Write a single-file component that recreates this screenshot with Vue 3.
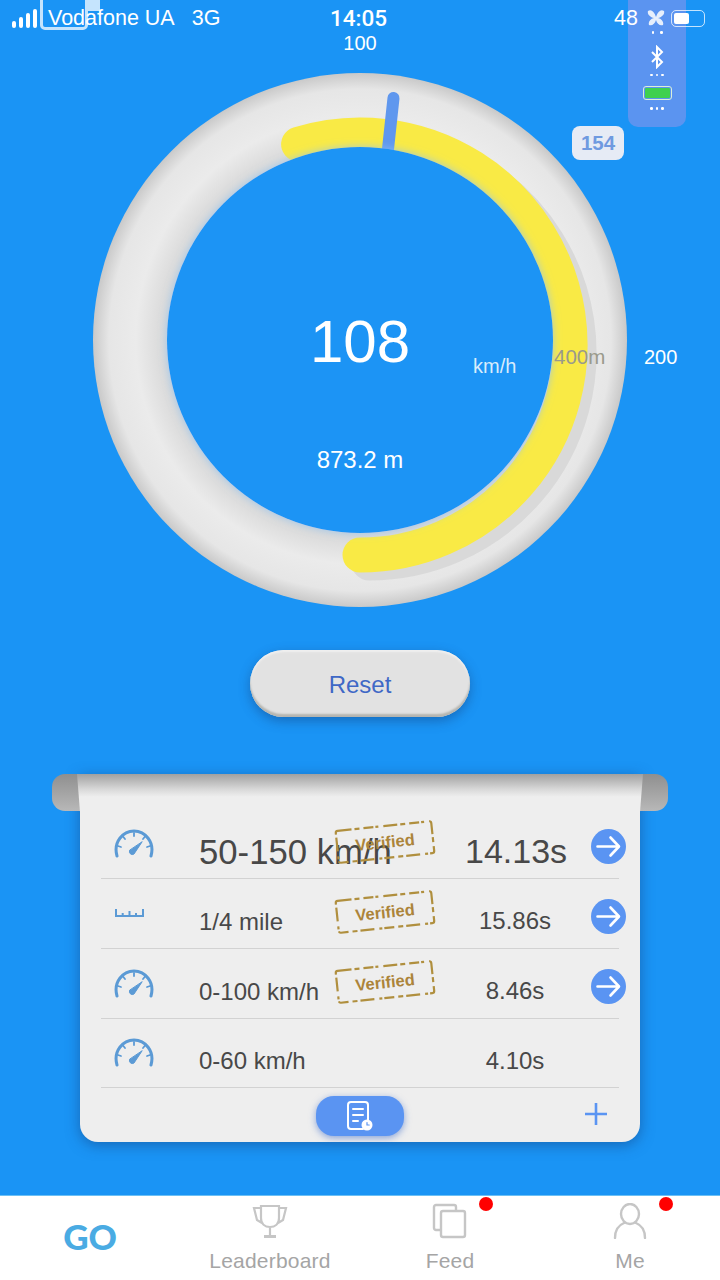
<template>
  <div class="page">
    <div class="status">
      <div class="status-left">
        <span class="signal"><i v-for="h in [7, 11, 15, 19]" :key="h" :style="{ height: h + 'px' }"></i></span>
        <span class="carrier">Vodafone UA</span>
        <span class="net">3G</span>
      </div>
      <span class="clock">14:05</span>
      <div class="status-right">
        <span>48</span>
        <svg class="fan" width="20" height="20" viewBox="0 0 20 20" fill="#fff">
          <path d="M2 3c3-2 6 0 8 6 2-6 5-8 8-6 1 3-2 6-6 7 4 1 6 4 5 7-3 1-6-1-7-5-1 4-4 6-7 5-1-3 1-6 5-7C4 9 1 6 2 3z" />
        </svg>
        <span class="battery"><i></i></span>
      </div>
    </div>
    <div class="notch"></div>
    <div class="notch-side"></div>

    <div class="side-pill">
      <span class="dots two"><i></i><i></i></span>
      <svg class="bt" width="14" height="24" viewBox="0 0 14 24" fill="none" stroke="#fff" stroke-width="2">
        <path d="M2 7l10 10-5 5V2l5 5L2 17" />
      </svg>
      <span class="dots"><i></i><i></i><i></i></span>
      <span class="mini-batt"><i></i></span>
      <span class="dots"><i></i><i></i><i></i></span>
    </div>

    <div class="top-label">100</div>

    <div class="gauge">
      <svg width="534" height="534" viewBox="0 0 534 534">
        <defs>
          <radialGradient id="ringFill" cx="50%" cy="50%" r="50%">
            <stop offset="0.72" stop-color="#d6d6d6" />
            <stop offset="0.84" stop-color="#ebebeb" />
            <stop offset="0.94" stop-color="#e6e6e6" />
            <stop offset="1" stop-color="#c9c9c9" />
          </radialGradient>
          <filter id="discShadow" x="-10%" y="-10%" width="120%" height="120%">
            <feDropShadow dx="0" dy="0" stdDeviation="4" flood-color="#8fc4f5" flood-opacity="0.8" />
          </filter>
        </defs>
        <circle cx="267" cy="267" r="267" fill="url(#ringFill)" />
        <path :d="arc" transform="translate(9 13)" fill="none" stroke="#d9d9d9" stroke-width="35" stroke-linecap="round" />
        <path :d="arc" transform="translate(0 5)" fill="none" stroke="#f9ea45" stroke-width="35" stroke-linecap="round" />
        <path d="M300.5 25 L295 76" stroke="#5f97ee" stroke-width="12" stroke-linecap="round" />
        <circle cx="267" cy="267" r="193" fill="#1a94f5" filter="url(#discShadow)" />
      </svg>
      <span class="speed">108</span>
      <span class="unit">km/h</span>
      <span class="distance">873.2 m</span>
      <span class="mark-400">400m</span>
      <span class="mark-200">200</span>
      <span class="badge">154</span>
    </div>

    <button class="reset">Reset</button>

    <div class="card">
      <div class="curl-tab left"></div>
      <div class="curl-tab right"></div>
      <div class="curl"></div>

      <div v-for="row in rows" :key="row.label" class="row" :class="{ big: row.big, last: row.last }">
        <svg v-if="row.icon === 'gauge'" class="row-icon" width="40" height="30" viewBox="0 0 40 30" fill="none" stroke="#5b9ad5" stroke-linecap="round">
          <path d="M3 27C-1 13 9 2 20 2s21 11 17 25" stroke-width="3" />
          <path d="M20 4v3M9 7.5l2 2.5M31 7.5l-2 2.5M4 17l3 1M36 17l-3 1" stroke-width="1.8" />
          <path d="M15.5 21.5a3 3 0 0 0 4.5 3.5L28 13z" fill="#5b9ad5" stroke-width="1" />
        </svg>
        <svg v-else class="row-icon" width="40" height="30" viewBox="0 0 40 30" fill="none" stroke="#5b9ad5" stroke-width="2">
          <path d="M2 10v7h27v-7M8.7 14v3M15.5 12v5M22 14v3" />
        </svg>
        <span class="label">{{ row.label }}</span>
        <span class="time">{{ row.time }}</span>
        <svg v-if="row.verified" class="go" width="35" height="35" viewBox="0 0 35 35" fill="none" stroke="#fff" stroke-width="2.6" stroke-linecap="round" stroke-linejoin="round">
          <circle cx="17.5" cy="17.5" r="17.5" fill="#5a94f2" stroke="none" />
          <path d="M6.5 17.5h21M19.5 8.5l8.5 9-8.5 9" />
        </svg>
        <div v-if="row.verified" class="stamp">
          <svg width="100" height="38" viewBox="0 0 100 38" fill="none" stroke="#b08f3e" stroke-width="2.2">
            <rect x="2" y="3" width="96" height="32" rx="2" stroke-dasharray="14 3 5 4 10 2 3 5" />
          </svg>
          <span>Verified</span>
        </div>
      </div>

      <div class="card-foot">
        <span></span>
        <button class="history">
          <svg width="28" height="32" viewBox="0 0 28 32" fill="none" stroke="#fff" stroke-width="2" stroke-linecap="round">
            <path d="M17 29H5a3 3 0 0 1-3-3V5a3 3 0 0 1 3-3h14a3 3 0 0 1 3 3v15" />
            <path d="M7 9h10M7 15h10M7 21h5" />
            <circle cx="21" cy="25" r="5.5" fill="#fff" stroke="none" />
            <path d="M21 22.5V25h2.2" stroke="#5a94f2" stroke-width="1.2" />
          </svg>
        </button>
        <svg class="plus" width="22" height="22" viewBox="0 0 22 22" stroke="#5a94f2" stroke-width="2.6">
          <path d="M11 0v22M0 11h22" />
        </svg>
      </div>
    </div>

    <nav class="tabbar">
      <div class="tab active"><span class="go-text">GO</span></div>
      <div class="tab">
        <svg width="36" height="36" viewBox="0 0 36 36" fill="none" stroke="#c6c6c6" stroke-width="2.2">
          <path d="M9 3h18v12c0 6-4 9-9 9s-9-3-9-9V3zM9 5H2l3 12 5 3M27 5h7l-3 12-5 3M18 24v8" />
          <path d="M12 33.5h12" stroke-width="3" />
        </svg>
        <span>Leaderboard</span>
      </div>
      <div class="tab">
        <svg width="36" height="36" viewBox="0 0 36 36" fill="none" stroke="#c6c6c6" stroke-width="2.4" stroke-linejoin="round">
          <path d="M8 27H4a2 2 0 0 1-2-2V4a2 2 0 0 1 2-2h18a2 2 0 0 1 2 2v4" />
          <rect x="9" y="8" width="24" height="26" rx="2" />
        </svg>
        <span>Feed</span>
        <i class="dot"></i>
      </div>
      <div class="tab">
        <svg width="36" height="36" viewBox="0 0 36 36" fill="none" stroke="#c6c6c6" stroke-width="2.4" stroke-linecap="round">
          <ellipse cx="18" cy="11" rx="9" ry="10" />
          <path d="M3 35c0-8 4-13 9-15M33 35c0-8-4-13-9-15" />
        </svg>
        <span>Me</span>
        <i class="dot"></i>
      </div>
    </nav>
  </div>
</template>

<script setup>
const cx = 267;
const cy = 267;
const r = 210;

function point(deg) {
  const a = (deg * Math.PI) / 180;
  return `${(cx + r * Math.sin(a)).toFixed(1)} ${(cy - r * Math.cos(a)).toFixed(1)}`;
}

// goes past the half circle, so the large-arc flag is set
const arc = `M${point(-17)} A${r} ${r} 0 1 1 ${point(180)}`;

const rows = [
  { icon: 'gauge', label: '50-150 km/h', time: '14.13s', verified: true, big: true },
  { icon: 'ruler', label: '1/4 mile', time: '15.86s', verified: true },
  { icon: 'gauge', label: '0-100 km/h', time: '8.46s', verified: true },
  { icon: 'gauge', label: '0-60 km/h', time: '4.10s', verified: false, last: true },
];
</script>

<style>
body {
  background: #1a94f5;
}
</style>

<style scoped>
.page {
  position: relative;
  width: 720px;
  height: 1280px;
  overflow: hidden;
  display: flex;
  flex-direction: column;
  background: #1a94f5;
  color: #fff;
  font-family: "Liberation Sans", Arial, sans-serif;
}
.status {
  height: 26px;
  margin-top: 5px;
  display: grid;
  grid-template-columns: 1fr auto 1fr;
  align-items: center;
  padding: 0 15px 0 12px;
  font-size: 21.5px;
}
.status-left {
  display: flex;
  align-items: center;
}
.signal {
  display: flex;
  align-items: flex-end;
  gap: 3px;
  width: 36px;
  height: 19px;
}
.signal i {
  width: 4px;
  background: #fff;
  border-radius: 2px;
}
.net {
  margin-left: 17px;
}
.clock {
  font-family: Roboto, sans-serif;
  font-weight: 500;
  font-size: 22.5px;
}
.status-right {
  display: flex;
  align-items: center;
  justify-content: flex-end;
  position: relative;
  z-index: 3;
}
.fan {
  margin-left: 8px;
  opacity: 0.85;
}
.battery {
  width: 34px;
  height: 17px;
  margin-left: 5px;
  padding: 2px;
  border: 1.5px solid rgba(255, 255, 255, 0.75);
  border-radius: 5px;
  box-sizing: border-box;
  display: flex;
}
.battery i {
  width: 15px;
  background: #fff;
  border-radius: 2px;
}
.notch {
  position: absolute;
  left: 40px;
  top: -6px;
  width: 48px;
  height: 36px;
  box-sizing: border-box;
  border: 3px solid rgba(255, 255, 255, 0.75);
  border-radius: 5px;
}
.notch-side {
  position: absolute;
  left: 88px;
  top: 0;
  width: 12px;
  height: 11px;
  background: rgba(255, 255, 255, 0.75);
}
.side-pill {
  position: absolute;
  left: 628px;
  top: 0;
  width: 58px;
  height: 127px;
  padding-top: 31px;
  box-sizing: border-box;
  background: #5b94f0;
  border-radius: 0 0 10px 10px;
  display: flex;
  flex-direction: column;
  align-items: center;
}
.bt {
  margin: 11px 0 5px;
}
.dots {
  display: flex;
  gap: 3px;
}
.dots.two {
  gap: 6px;
}
.dots i {
  width: 2.5px;
  height: 2.5px;
  border-radius: 50%;
  background: #fff;
}
.mini-batt {
  width: 29px;
  height: 14px;
  box-sizing: border-box;
  padding: 1px;
  margin: 10px 0 7px;
  border: 1px solid #d9f0d9;
  border-radius: 3px;
  display: flex;
}
.mini-batt i {
  flex: 1;
  background: #3fd04f;
  border-radius: 1px;
}
.top-label {
  text-align: center;
  font-size: 20px;
  line-height: 24px;
}
.gauge {
  position: relative;
  align-self: center;
  width: 534px;
  height: 534px;
  margin-top: 18px;
}
.gauge svg {
  display: block;
}
.gauge span {
  position: absolute;
  line-height: 1;
  white-space: nowrap;
}
.speed {
  left: 0;
  right: 0;
  top: 239px;
  text-align: center;
  font-size: 60px;
}
.unit {
  left: 380px;
  top: 283px;
  font-size: 20px;
  color: #d8ecfc;
}
.distance {
  left: 0;
  right: 0;
  top: 375px;
  text-align: center;
  font-size: 24px;
}
.mark-400 {
  left: 461px;
  top: 274px;
  font-size: 20.5px;
  color: #9a9a8c;
}
.mark-200 {
  left: 551px;
  top: 274px;
  font-size: 20px;
}
.gauge .badge {
  left: 479px;
  top: 53px;
  width: 52px;
  height: 34px;
  line-height: 34px;
  text-align: center;
  background: #e6ebf5;
  border-radius: 8px;
  color: #6f9ae0;
  font-size: 20.5px;
  font-weight: 700;
}
.reset {
  align-self: center;
  width: 220px;
  height: 67px;
  margin-top: 43px;
  padding-top: 4px;
  border: 0;
  border-radius: 34px;
  background: #e2e2e2;
  color: #3f68c6;
  font: 24px "Liberation Sans", Arial, sans-serif;
  box-shadow: inset 0 -3px 2px #b5b5b0, inset 0 2px 2px #f0f0f0, 0 4px 12px rgba(20, 60, 120, 0.45);
}
.card {
  position: relative;
  align-self: center;
  width: 560px;
  height: 368px;
  margin-top: 57px;
  padding-top: 35px;
  box-sizing: border-box;
  background: #eeeeee;
  border-radius: 0 0 18px 18px;
  box-shadow: 0 3px 14px rgba(20, 60, 120, 0.5);
  color: #484848;
}
.curl {
  position: absolute;
  left: -3px;
  right: -3px;
  top: 0;
  height: 38px;
  background: linear-gradient(#a0a0a0, #d8d8d8 40%, #eeeeee 60%);
  clip-path: polygon(0 0, 100% 0, calc(100% - 3px) 100%, 3px 100%);
}
.curl-tab {
  position: absolute;
  top: 0;
  width: 30px;
  height: 37px;
  background: linear-gradient(#8f8f8f, #b8b8b8);
}
.curl-tab.left {
  left: -28px;
  border-radius: 13px 0 0 13px;
}
.curl-tab.right {
  right: -28px;
  border-radius: 0 13px 13px 0;
}
.row {
  position: relative;
  height: 70px;
  margin: 0 21px;
  box-sizing: border-box;
  border-bottom: 1px solid #d2d2d2;
  display: grid;
  grid-template-columns: 98px 1fr 100px 54px;
  align-items: center;
  font-size: 24px;
}
.row.last {
  height: 69px;
}
.row-icon {
  justify-self: start;
  margin-left: 13px;
}
.label,
.time {
  padding-top: 16px;
  white-space: nowrap;
}
.time {
  text-align: center;
  padding-top: 15px;
}
.row.big {
  font-size: 34px;
}
.row.big .label {
  font-size: 34.7px;
  padding-top: 18px;
}
.row.big .time {
  padding-top: 16px;
}
.go {
  margin-left: 26px;
  margin-top: 6px;
}
.stamp {
  position: absolute;
  left: 234px;
  top: 14px;
  width: 100px;
  height: 38px;
  transform: rotate(-6deg);
  display: flex;
  align-items: center;
  justify-content: center;
  font-size: 16.5px;
  font-weight: 700;
  color: #ac843a;
}
.stamp svg {
  position: absolute;
  inset: 0;
}
.card-foot {
  display: grid;
  grid-template-columns: 1fr auto 1fr;
  align-items: center;
  padding-top: 8px;
}
.history {
  width: 88px;
  height: 40px;
  padding: 0;
  border: 0;
  border-radius: 18px;
  background: #5a94f2;
  box-shadow: 0 2px 7px rgba(50, 100, 200, 0.55);
  display: flex;
  align-items: center;
  justify-content: center;
}
.plus {
  justify-self: end;
  margin-right: 33px;
  margin-top: -4px;
}
.tabbar {
  margin-top: auto;
  height: 85px;
  box-sizing: border-box;
  background: #fff;
  border-top: 1px solid #6cc0f5;
  display: grid;
  grid-template-columns: repeat(4, 180px);
  color: #a5a5a5;
  font-size: 21px;
}
.tab {
  position: relative;
  display: flex;
  flex-direction: column;
  align-items: center;
  padding-top: 7px;
}
.tab span {
  margin-top: 10px;
  line-height: 24px;
  letter-spacing: 0.2px;
}
.tab.active {
  padding-top: 18px;
}
.tab .go-text {
  margin-top: 0;
  font-family: Lato, sans-serif;
  font-size: 35px;
  font-weight: 900;
  line-height: 44px;
  letter-spacing: 0;
  color: #4aabe3;
}
.dot {
  position: absolute;
  left: 119px;
  top: 1px;
  width: 14px;
  height: 14px;
  border-radius: 50%;
  background: #f00;
}
</style>
